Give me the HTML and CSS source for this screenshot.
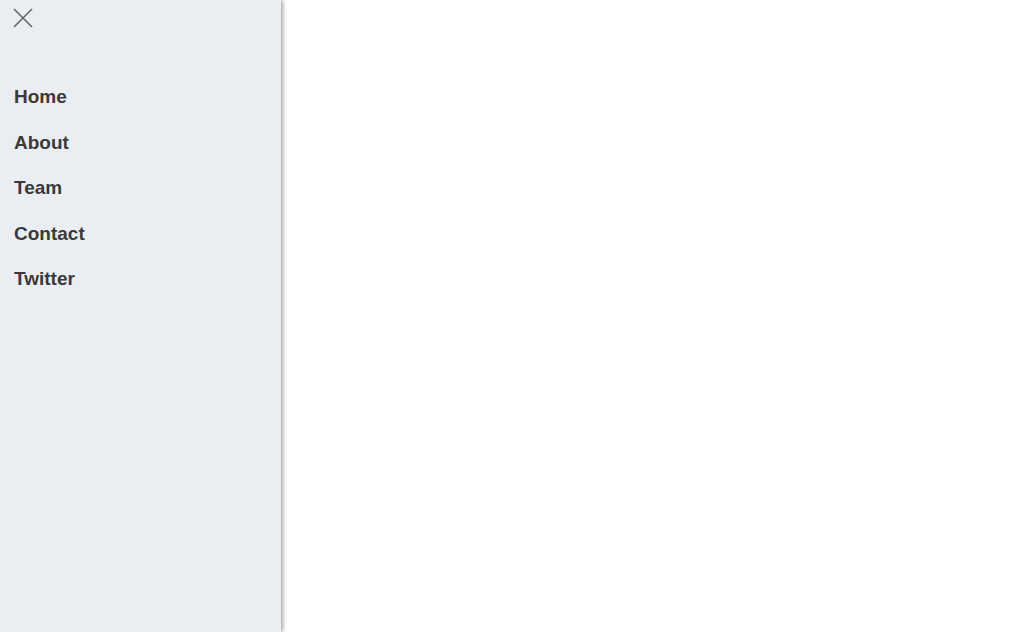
FILE: index.html
```html
<!DOCTYPE html>
<html lang="en">
<head>
    <meta charset="UTF-8">
    <meta name="viewport" content="width=device-width, initial-scale=1.0">
    <title>Side Menu</title>
    <link rel="stylesheet" href="styles.css">
</head>
<body>
    <!-- Side navigation -->
    <nav class="sidenav">
        <button class="close-btn" aria-label="Close">
            <svg width="22" height="22" viewBox="0 0 22 22">
                <path d="M2 2 L20 20 M20 2 L2 20" stroke="#666" stroke-width="1.6" fill="none"/>
            </svg>
        </button>
        <ul class="menu">
            <li><a href="#">Home</a></li>
            <li><a href="#">About</a></li>
            <li><a href="#">Team</a></li>
            <li><a href="#">Contact</a></li>
            <li><a href="#">Twitter</a></li>
        </ul>
    </nav>
    <main class="content"></main>
</body>
</html>
```
FILE: styles.css
```css
body {
    margin: 0;
    padding: 0;
    font-family: "Liberation Sans", Arial, sans-serif;
    background-color: #fff;
    display: flex;
    height: 100vh;
}

.sidenav {
    width: 281px;
    height: 100%;
    background-color: #eaeef2;
    box-shadow: 2px 0 4px rgba(0, 0, 0, 0.35);
    flex-shrink: 0;
}

.close-btn {
    display: block;
    background: none;
    border: none;
    padding: 0;
    margin: 7px 0 0 12px;
    cursor: pointer;
    line-height: 0;
}

.menu {
    list-style: none;
    margin: 45px 0 0 0;
    padding: 0;
}

.menu li a {
    display: block;
    padding: 12px 14px;
    line-height: 21.5px;
    font-size: 19px;
    font-weight: bold;
    color: #3a3a3a;
    text-decoration: none;
}

.content {
    flex: 1;
}
```
